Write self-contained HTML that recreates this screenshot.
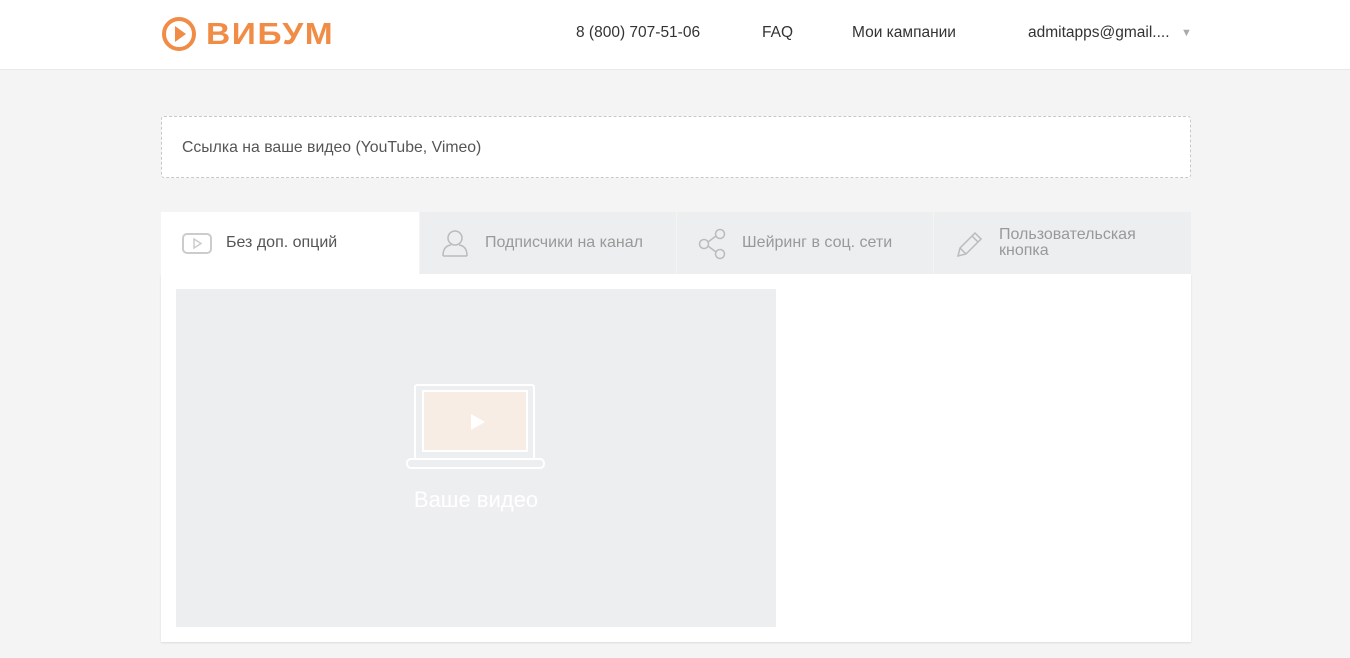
<!DOCTYPE html>
<html><head><meta charset="utf-8"><style>
body{margin:0;width:1350px;height:658px;background:#f4f4f4;font-family:"Liberation Sans",sans-serif;position:relative;overflow:hidden}
.hdr{position:absolute;left:0;top:0;width:1350px;height:69px;background:#fff;border-bottom:1px solid #e8e8e8}
.nav{position:absolute;top:24px;font-size:15.5px;color:#333}
.inp{position:absolute;left:161px;top:116px;width:1028px;height:60px;background:#fff;border:1px dashed #c8c8c8;border-radius:3px}
.inp span{position:absolute;left:20px;top:22px;font-size:15.8px;color:#555}
.tab{position:absolute;top:212px;height:62px;width:256px;background:#edeef0;color:#999;font-size:16px}
.tab svg{position:absolute;left:20px;top:16px}
.tab .t{position:absolute;left:65px;top:22px;line-height:16px}
.panel{position:absolute;left:161px;top:274px;width:1030px;height:368px;background:#fff;box-shadow:0 1px 2px rgba(0,0,0,.1)}
.vid{position:absolute;left:176px;top:289px;width:600px;height:338px;background:#edeef0}
</style></head><body>
<div class="hdr">
<svg style="position:absolute;left:161px;top:16px" width="36" height="36" viewBox="0 0 36 36"><circle cx="18" cy="18" r="15" fill="none" stroke="#f08c45" stroke-width="4"/><path d="M14 10 L25 18 L14 26Z" fill="#f08c45"/></svg>
<div style="position:absolute;left:206px;top:16px;font-size:31px;font-weight:bold;color:#f08c45;letter-spacing:1.5px;transform:scaleX(1.08);transform-origin:left">ВИБУМ</div>
<div class="nav" style="left:576px">8 (800) 707-51-06</div>
<div class="nav" style="left:762px">FAQ</div>
<div class="nav" style="left:852px">Мои кампании</div>
<div class="nav" style="left:1028px">admitapps@gmail....</div>
<div class="nav" style="left:1181px;color:#aaa;font-size:11px;top:27px">▼</div>
</div>
<div class="inp"><span>Ссылка на ваше видео (YouTube, Vimeo)</span></div>
<div class="panel"></div>
<div class="tab" style="left:161px;width:258px;background:#fff;color:#555"><svg width="32" height="30"><rect x="2" y="6" width="28" height="19" rx="4" fill="none" stroke="#ccc" stroke-width="2"/><path d="M13 11 L20 15.5 L13 20Z" fill="none" stroke="#ccc" stroke-width="1.5"/></svg><div class="t" style="top:23px">Без доп. опций</div></div>
<div class="tab" style="left:420px"><svg width="30" height="30"><circle cx="15" cy="10" r="7" fill="none" stroke="#bbb" stroke-width="1.5"/><path d="M3 28 Q3 18 11 17 M27 28 Q27 18 19 17 M3 28H27" fill="none" stroke="#bbb" stroke-width="1.5"/></svg><div class="t" style="top:23px">Подписчики на канал</div></div>
<div class="tab" style="left:677px"><svg width="30" height="32"><circle cx="23" cy="6" r="4.5" fill="none" stroke="#bbb" stroke-width="1.5"/><circle cx="7" cy="16" r="4.5" fill="none" stroke="#bbb" stroke-width="1.5"/><circle cx="23" cy="26" r="4.5" fill="none" stroke="#bbb" stroke-width="1.5"/><path d="M11 14L19 8M11 18L19 24" stroke="#bbb" stroke-width="1.5"/></svg><div class="t" style="top:23px">Шейринг в соц. сети</div></div>
<div class="tab" style="left:934px;width:257px"><svg width="30" height="32"><path d="M4 28 L6 20 L21 5 L27 11 L12 26Z M6 20 L12 26 M18 8 L24 14" fill="none" stroke="#bbb" stroke-width="1.5"/></svg><div class="t" style="top:15px">Пользовательская<br>кнопка</div></div>
<div class="vid"></div>
<svg style="position:absolute;left:405px;top:383px" width="142" height="88"><rect x="10" y="2" width="119" height="74" rx="2" fill="none" stroke="#fff" stroke-width="2"/><rect x="18" y="8" width="104" height="60" fill="#f7ede4" stroke="#fff" stroke-width="2"/><path d="M66 31 L80 39 L66 47Z" fill="#fff"/><rect x="2" y="76" width="137" height="9" rx="4" fill="none" stroke="#fff" stroke-width="2"/></svg>
<div style="position:absolute;left:176px;width:600px;top:487px;text-align:center;color:#fff;font-size:22px">Ваше видео</div>
</body></html>
